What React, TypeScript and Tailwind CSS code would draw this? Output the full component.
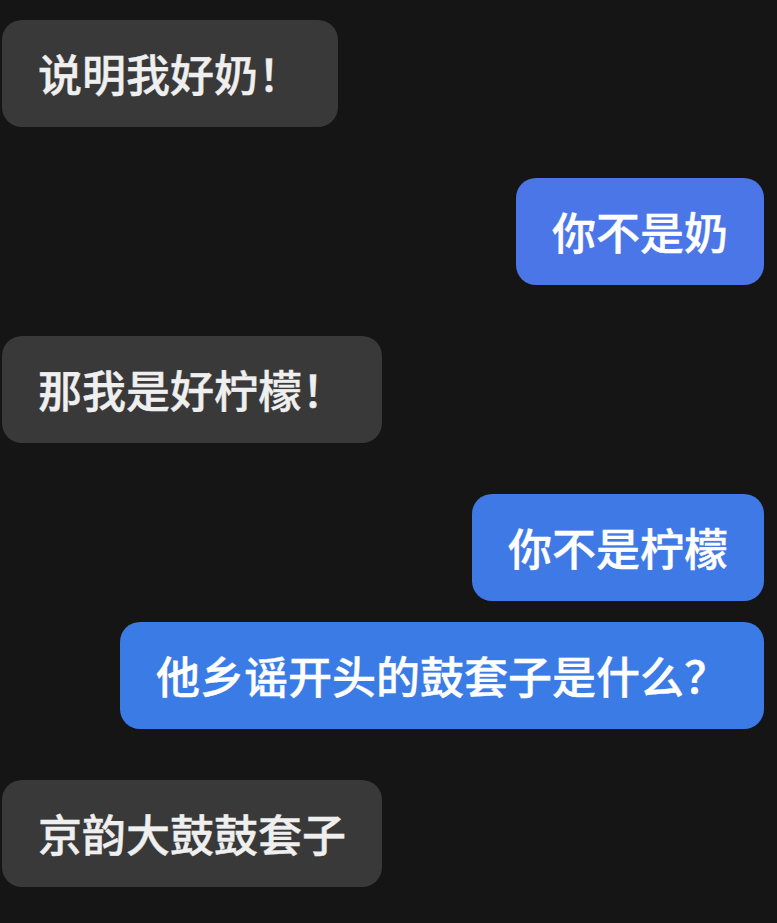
import React from 'react';

interface Message {
  id: number;
  text: string;
  mine: boolean;
  color?: string;
}

const messages: Message[] = [
  { id: 1, text: '说明我好奶！', mine: false },
  { id: 2, text: '你不是奶', mine: true, color: 'bg-[#4a76e7]' },
  { id: 3, text: '那我是好柠檬！', mine: false },
  { id: 4, text: '你不是柠檬', mine: true, color: 'bg-[#3f79e6]' },
  { id: 5, text: '他乡谣开头的鼓套子是什么？', mine: true, color: 'bg-[#3b7be6]' },
  { id: 6, text: '京韵大鼓鼓套子', mine: false },
];

const App: React.FC = () => {
  return (
    <div
      className="min-h-[923px] w-full bg-[#151515] pt-[20px] pl-[2px] pr-[13px]"
      style={{ fontFamily: '"Noto Sans CJK SC", "Noto Sans", sans-serif' }}
    >
      {messages.map((msg, i) => {
        const prev = messages[i - 1];
        const sameSender = prev && prev.mine === msg.mine;
        return (
          <div
            key={msg.id}
            className={`flex ${msg.mine ? 'justify-end' : 'justify-start'} ${
              i === 0 ? '' : sameSender ? 'mt-[21px]' : 'mt-[51px]'
            }`}
          >
            <div
              className={`rounded-[20px] px-[36px] py-[24px] text-[44px] leading-[59px] font-medium [-webkit-text-stroke:0.4px_currentColor] whitespace-nowrap ${
                msg.mine ? `${msg.color} text-white` : 'bg-[#393939] text-[#efefef]'
              }`}
            >
              {msg.text}
            </div>
          </div>
        );
      })}
    </div>
  );
};

export default App;
